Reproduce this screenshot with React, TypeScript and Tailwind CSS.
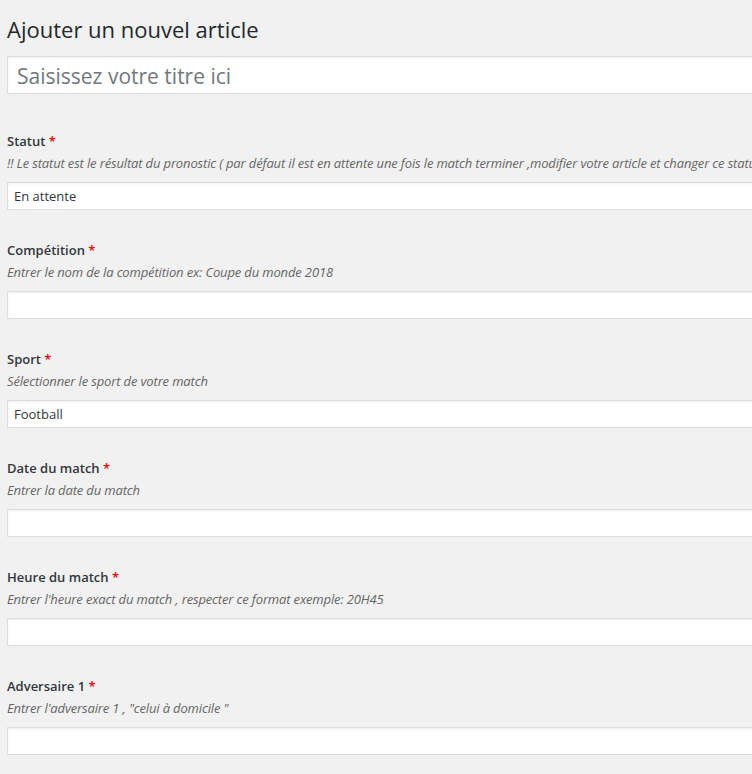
import React from 'react';

type Field = {
  label: string;
  hint: string;
  value?: string;
};

const fields: Field[] = [
  {
    label: 'Statut',
    hint: "!! Le statut est le résultat du pronostic ( par défaut il est en attente une fois le match terminer ,modifier votre article et changer ce statut )",
    value: 'En attente',
  },
  { label: 'Compétition', hint: 'Entrer le nom de la compétition ex: Coupe du monde 2018' },
  { label: 'Sport', hint: 'Sélectionner le sport de votre match', value: 'Football' },
  { label: 'Date du match', hint: 'Entrer la date du match' },
  { label: 'Heure du match', hint: "Entrer l'heure exact du match , respecter ce format exemple: 20H45" },
  { label: 'Adversaire 1', hint: 'Entrer l\'adversaire 1 , "celui à domicile "' },
];

function FieldRow({ field }: { field: Field }) {
  return (
    <div className="pb-[30px]">
      <div className="text-[13px] leading-[20px] font-semibold text-[#32373c]">
        {field.label} <span className="text-[#ff0000]">*</span>
      </div>
      <p className="mt-[3px] text-[13px] leading-[18px] italic tracking-[-0.15px] text-[#666] whitespace-nowrap">
        {field.hint}
      </p>
      <div className="mt-[10px] h-[28px] bg-white border border-[#dddddd] shadow-[inset_0_1px_2px_rgba(0,0,0,0.07)] flex items-center px-[6px] pt-[2px] text-[13px] text-[#32373c]">
        {field.value}
      </div>
    </div>
  );
}

export default function App() {
  return (
    <div
      className="h-[774px] w-full overflow-hidden bg-[#f1f1f1]"
      style={{ fontFamily: '"Open Sans", "Noto Sans", sans-serif' }}
    >
      <div className="w-[1100px] pl-[7px]">
        {/* Page title */}
        <h1 className="pt-[14px] text-[22px] leading-[30px] font-normal text-[#23282d]">
          Ajouter un nouvel article
        </h1>

        {/* Title input */}
        <div className="mt-[12px] h-[38px] bg-white border border-[#dddddd] shadow-[inset_0_1px_2px_rgba(0,0,0,0.07)] flex items-center px-[9px] pt-[3px] text-[21px] text-[#72777c]">
          Saisissez votre titre ici
        </div>

        {/* Custom fields */}
        <div className="mt-[37px]">
          {fields.map((f) => (
            <FieldRow key={f.label} field={f} />
          ))}
        </div>
      </div>
    </div>
  );
}
